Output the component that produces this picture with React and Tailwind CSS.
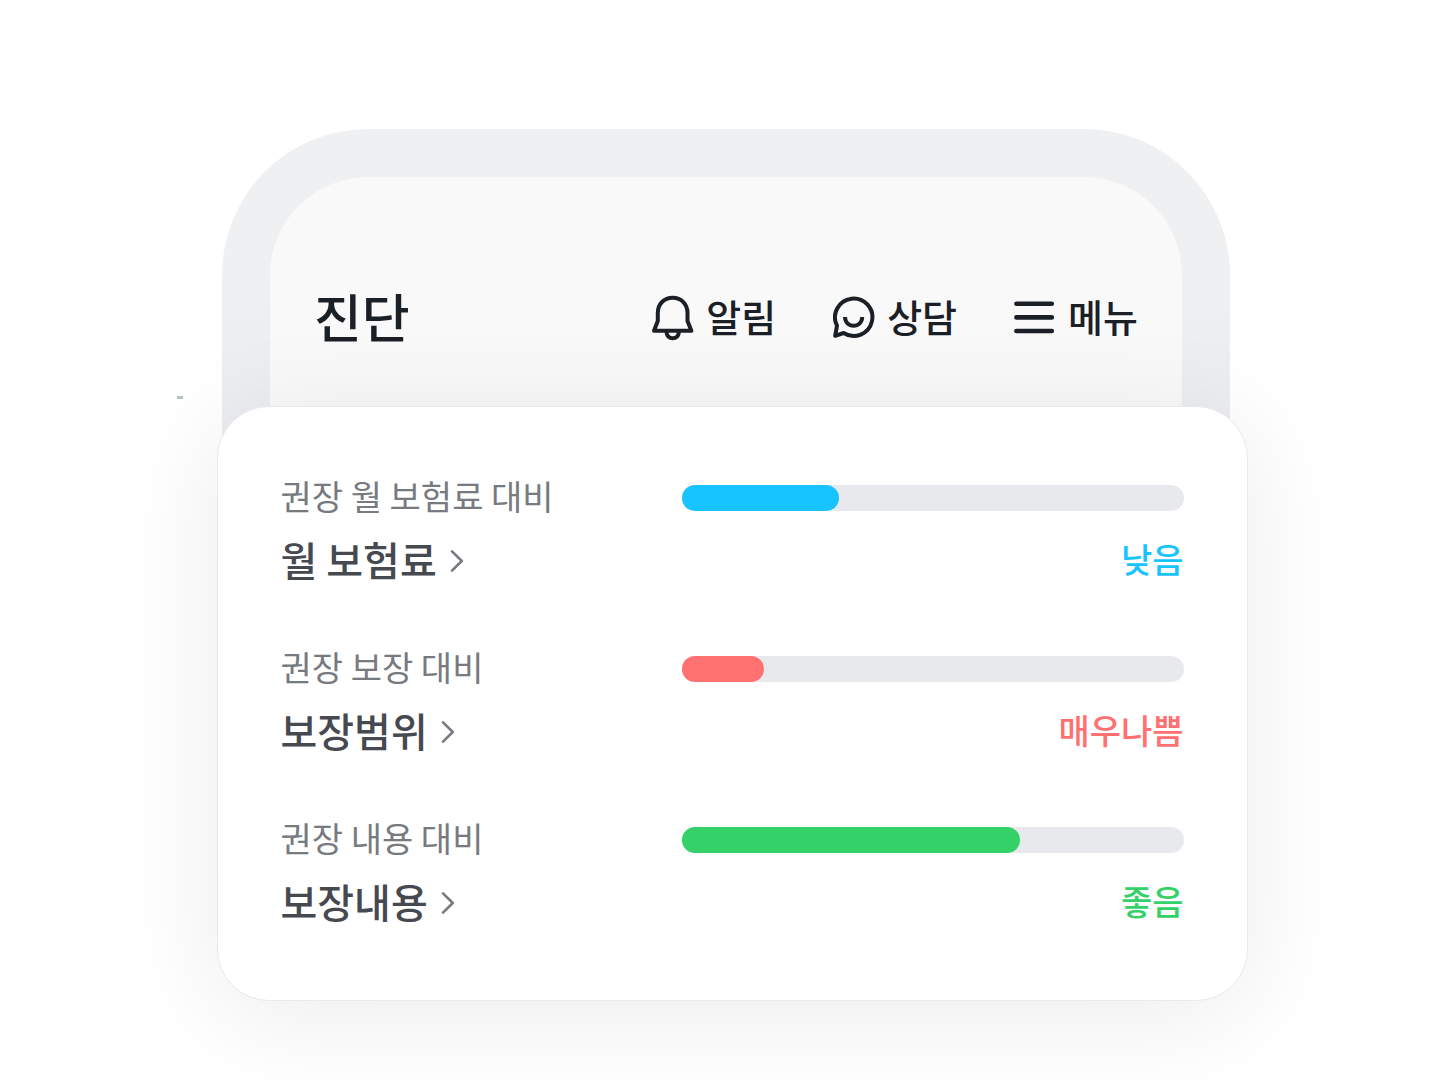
import React from 'react';

const BellIcon = () => (
    <svg className="w-[42px] h-12" viewBox="0 0 42 48" fill="none" stroke="currentColor" strokeWidth="4" strokeLinejoin="round" aria-hidden="true">
        <path d="M5.8 27V19C5.8 10 12 3.8 20.7 3.8S35.5 10 35.5 19V27L39.4 36.8H2L5.8 27Z" />
        <path d="M14.4 38C15 42 17.4 44.3 20.7 44.3S26.4 42 27 38" />
    </svg>
);

const ChatIcon = () => (
    <svg className="w-[42px] h-12" viewBox="0 0 42 48" fill="none" stroke="currentColor" strokeWidth="4" strokeLinejoin="round" aria-hidden="true">
        <path d="M4 31.7A18.7 18.7 0 1 1 10.6 39L2.2 41.8L4 31.7Z" />
        <path d="M12 23C12 28.2 15.8 31.8 20.6 31.8S29.2 28.2 29.2 23" />
    </svg>
);

const MenuIcon = () => (
    <svg className="w-[42px] h-12" viewBox="0 0 42 48" fill="none" stroke="currentColor" strokeWidth="4.6" strokeLinecap="round" aria-hidden="true">
        <path d="M2.4 9.7H37.8M2.4 23.4H37.8M2.4 37H37.8" />
    </svg>
);

const ChevronIcon = () => (
    <svg className="w-4 h-6" viewBox="0 0 16 24" fill="none" stroke="#777a80" strokeWidth="2.6" strokeLinecap="round" strokeLinejoin="round" aria-hidden="true">
        <path d="M3 2.4L12.8 12L3 21.6" />
    </svg>
);

const menus = [
    { name: '알림', Icon: BellIcon },
    { name: '상담', Icon: ChatIcon },
    { name: '메뉴', Icon: MenuIcon },
];

const results = [
    { label: '권장 월 보험료 대비', title: '월 보험료', status: '낮음', percent: 31.3, bar: 'bg-[#17c4ff]', text: 'text-[#17c4ff]' },
    { label: '권장 보장 대비', title: '보장범위', status: '매우나쁨', percent: 16.3, bar: 'bg-[#ff7070]', text: 'text-[#ff7070]' },
    { label: '권장 내용 대비', title: '보장내용', status: '좋음', percent: 67.5, bar: 'bg-[#33d167]', text: 'text-[#33d167]' },
];

const ResultRow = ({ label, title, status, percent, bar, text }) => (
    <li>
        <div className="flex h-14 items-center justify-between">
            <span className="pb-1 text-[34px] leading-none whitespace-nowrap text-[#777a7f]">{label}</span>
            <div
                role="progressbar"
                aria-label={label}
                aria-valuenow={percent}
                className="h-[26px] w-5/9 rounded-full bg-[#e8e9ed]"
            >
                <div className={`h-full rounded-full ${bar}`} style={{ width: `${percent}%` }}></div>
            </div>
        </div>
        <div className="flex h-[70px] items-center justify-between">
            <button type="button" className="flex items-center gap-3 text-[40px] leading-none font-medium whitespace-nowrap text-[#464950]">
                <span className="pb-1">{title}</span>
                <ChevronIcon />
            </button>
            <span className={`pb-1 text-[34px] leading-none font-medium ${text}`}>{status}</span>
        </div>
    </li>
);

const App = () => {
    return (
        <div className="relative flex min-h-screen flex-col items-center overflow-hidden bg-white pt-[129px] pb-[79px] pl-6 font-['Noto_Sans_CJK_KR',sans-serif]">
            {/* Phone frame */}
            <div className="mr-3 w-full max-w-[1008px] rounded-t-[146px] bg-linear-to-b from-[#eff0f2] from-40% to-[#ebecf1] px-12 pt-12">
                <header className="flex items-start justify-between rounded-t-[98px] bg-[#f9f9f9] px-11 pt-[101px] pb-24 text-[#1b2026]">
                    <h1 className="pb-1 text-[52px] leading-[76px] font-medium">진단</h1>
                    <nav className="flex h-20 items-center gap-[57px]">
                        {menus.map(({ name, Icon }) => (
                            <button key={name} type="button" className="flex items-center gap-3 text-[38px] leading-none font-medium">
                                <Icon />
                                <span className="pb-1">{name}</span>
                            </button>
                        ))}
                    </nav>
                </header>
            </div>

            {/* Result card */}
            <main className="relative -mt-12 w-full max-w-[1031px] rounded-[52px] border border-[#e8e9ed] bg-white px-[63px] pt-[63px] pb-[62px] shadow-[0_14px_108px_rgba(0,0,0,0.08)]">
                <ul className="flex flex-col gap-[45px]">
                    {results.map((item) => (
                        <ResultRow key={item.title} {...item} />
                    ))}
                </ul>
            </main>

            <span className="absolute top-[396px] left-[177px] h-[3px] w-1.5 bg-[#b4c4be]"></span>
        </div>
    );
};

export default App;
